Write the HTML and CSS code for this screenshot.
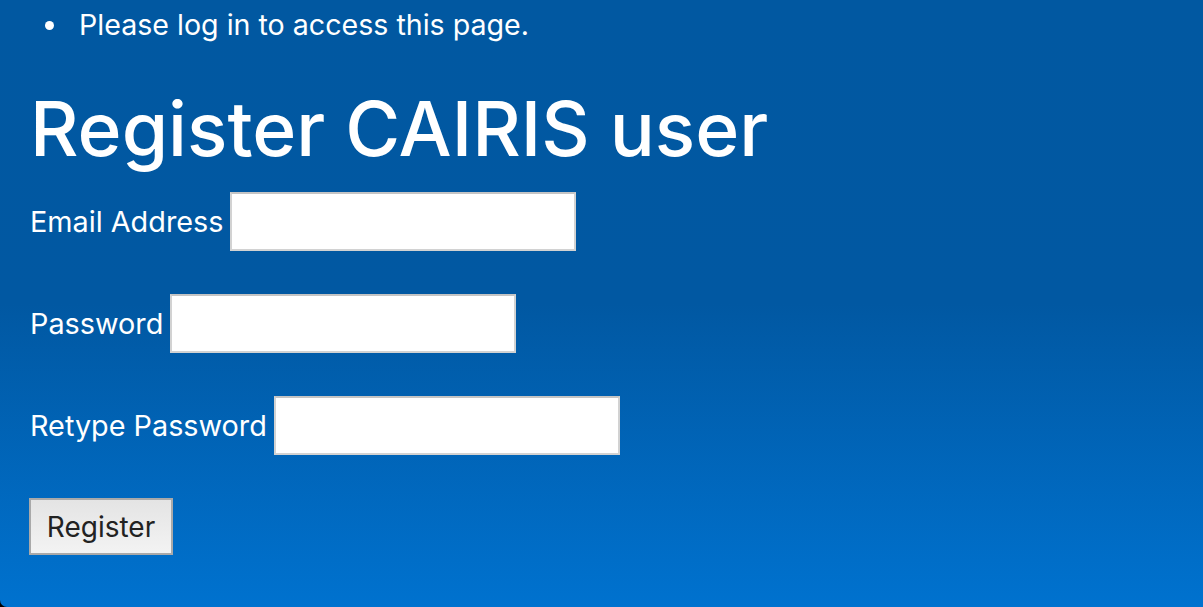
FILE: index.html
```html
<!DOCTYPE html>
<html lang="en">
<head>
<meta charset="utf-8">
<title>Register CAIRIS user</title>
<link rel="stylesheet" href="styles.css">
</head>
<body>
<div class="page">
  <ul class="messages">
    <li class="message">Please log in to access this page.</li>
  </ul>
  <h1 class="title">Register CAIRIS user</h1>
  <form class="form">
    <div class="row">
      <label for="email">Email Address</label>
      <input id="email" type="text" class="field">
    </div>
    <div class="row">
      <label for="pw">Password</label>
      <input id="pw" type="password" class="field">
    </div>
    <div class="row">
      <label for="pw2">Retype Password</label>
      <input id="pw2" type="password" class="field">
    </div>
    <div class="row">
      <button type="button" class="btn">Register</button>
    </div>
  </form>
</div>
</body>
</html>
```

FILE: styles.css
```css
html {
  background: #000;
  height: 100%;
}
body {
  margin: 0;
  height: 100%;
  font-family: Inter, "Noto Sans", sans-serif;
  color: #fff;
}
.page {
  box-sizing: border-box;
  height: 100%;
  padding: 0 29px;
  background: linear-gradient(180deg, #0158a1 0%, #0158a2 50%, #0072cf 100%);
  border-bottom-left-radius: 7px;
  overflow: hidden;
}
.messages {
  margin: 0;
  padding: 6px 0 0 16px;
  list-style: none;
  font-size: 28.6px;
  line-height: 38px;
}
.message {
  display: flex;
  align-items: center;
  gap: 25px;
}
.message::before {
  content: "";
  flex: none;
  width: 9px;
  height: 9px;
  border-radius: 50%;
  background: #fff;
}
.title {
  margin: 41px 0 0;
  padding-left: 1px;
  font-size: 75px;
  font-weight: 500;
  line-height: 88px;
}
.form {
  display: flex;
  flex-direction: column;
  gap: 43px;
  margin-top: 19px;
}
.row {
  display: flex;
  align-items: center;
  gap: 7px;
  font-size: 28.8px;
}
.row label {
  padding-left: 1px;
}
.field {
  box-sizing: border-box;
  width: 346px;
  height: 59px;
  margin: 0;
  border: 2px solid #d2d2d2;
  border-top-color: #c4c4c4;
  background: #fff;
}
.btn {
  box-sizing: border-box;
  width: 144px;
  height: 57px;
  margin: 0;
  border: 2px solid #a9a9a9;
  background: linear-gradient(180deg, #e4e4e4, #f3f3f3);
  color: #222;
  font-family: Inter, "Noto Sans", sans-serif;
  font-size: 28px;
}
```
